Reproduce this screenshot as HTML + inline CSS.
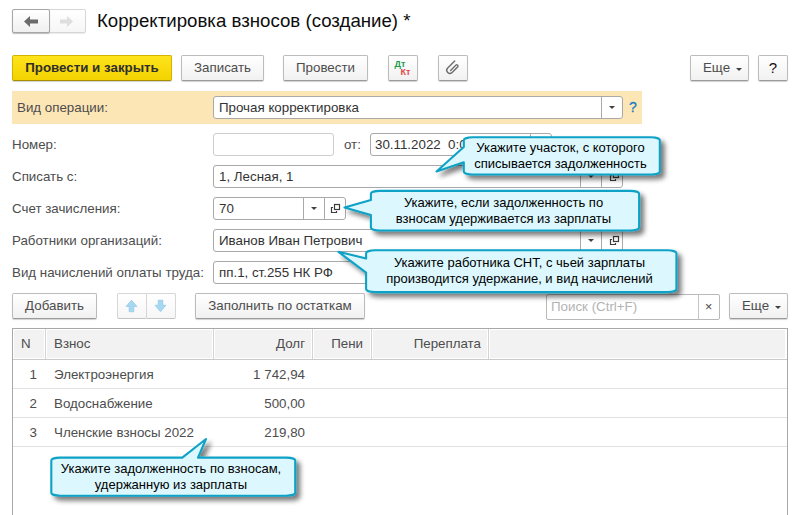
<!DOCTYPE html>
<html><head><meta charset="utf-8">
<style>
*{box-sizing:border-box;margin:0;padding:0}
html,body{width:800px;height:515px;overflow:hidden;background:#fff}
body{position:relative;font-family:"Liberation Sans",sans-serif;font-size:13.33px;color:#4d4d4d}
.a{position:absolute}
.btn{position:absolute;height:26px;border:1px solid #bcbcbc;border-bottom-color:#9a9a9a;border-radius:2px;background:linear-gradient(#ffffff,#f1f1f1);box-shadow:0 1px 1px rgba(0,0,0,.18);text-align:center;line-height:24px;color:#4d4d4d;white-space:nowrap}
.lbl{position:absolute;left:12px;white-space:nowrap;color:#4d4d4d}
.inp{position:absolute;height:23px;border:1px solid #a9a9a9;border-radius:3px;background:#fff;color:#333;line-height:21px;padding-left:5px;white-space:nowrap;overflow:hidden}
.sep{position:absolute;top:0;bottom:0;width:1px;background:#a9a9a9}
.tri{position:absolute;width:0;height:0;border-left:3px solid transparent;border-right:3px solid transparent;border-top:3px solid #404040}
.hc{position:absolute;top:330px;height:28px;background:#f2f2f2}
.cs{position:absolute;top:329px;height:30px;width:1px;background:#d4d4d4}
.row{position:absolute;left:13px;width:774px;height:1px;background:#e2e2e2}
.td{position:absolute;line-height:16px;color:#4d4d4d;white-space:nowrap}
.co{position:absolute;font-size:13px;color:#000;text-align:center;line-height:16px;white-space:nowrap}
</style></head><body>

<!-- nav buttons -->
<div class="a" style="left:12px;top:9px;width:74px;height:24px;border:1px solid #d6d6d6;border-radius:2px;background:linear-gradient(#fff,#f6f6f6);box-shadow:0 1px 1px rgba(0,0,0,.08)"></div>
<div class="a" style="left:12px;top:9px;width:38px;height:24px;border:1px solid #a6a6a6;border-radius:2px;background:linear-gradient(#fff,#f0f0f0);box-shadow:0 1px 1px rgba(0,0,0,.2)"></div>
<svg class="a" style="left:0;top:0" width="100" height="40">
  <path d="M24 21.5 L30 16 L30 19.5 L38 19.5 L38 23.5 L30 23.5 L30 27 Z" fill="#6b6b6b"/>
  <path d="M73 21.5 L67 16 L67 19.5 L60 19.5 L60 23.5 L67 23.5 L67 27 Z" fill="#dedede"/>
</svg>

<!-- title -->
<div class="a" style="left:97px;top:9px;font-size:18.67px;color:#0d0d0d;white-space:nowrap;line-height:24px">Корректировка взносов (создание) *</div>

<!-- toolbar -->
<div class="btn" style="left:12px;top:55px;width:160px;background:linear-gradient(#ffe41c,#f3d200);border-color:#d2b300;border-bottom-color:#a88f00;color:#2e2e2e;font-weight:bold">Провести и закрыть</div>
<div class="btn" style="left:181px;top:55px;width:83px">Записать</div>
<div class="btn" style="left:283px;top:55px;width:85px">Провести</div>
<div class="btn" style="left:388px;top:55px;width:30px"></div>
<div class="a" style="left:394.5px;top:60px;font-size:9px;font-weight:bold;color:#1f9a4e;line-height:9px">Дт</div>
<div class="a" style="left:400.5px;top:67.5px;font-size:9px;font-weight:bold;color:#e0484a;line-height:9px">Кт</div>
<div class="btn" style="left:438px;top:55px;width:30px"></div>
<svg class="a" style="left:438px;top:55px" width="30" height="26">
  <path d="M16.7 6.1 L9.7 13.1 A3.1 3.1 0 0 0 14.1 17.5 L19.8 11.8 A1.3 1.3 0 0 0 18 10 L12.6 15.4" fill="none" stroke="#6e6e6e" stroke-width="1.4" stroke-linecap="round"/>
</svg>
<div class="btn" style="left:690px;top:55px;width:59px;padding-right:6px">Еще</div>
<div class="tri" style="left:736px;top:68px"></div>
<div class="btn" style="left:758px;top:55px;width:30px;color:#111;font-size:15px">?</div>

<!-- orange panel -->
<div class="a" style="left:12px;top:91px;width:630px;height:33px;background:#fde6b6"></div>
<div class="lbl" style="left:17px;top:100px">Вид операции:</div>
<div class="inp" style="left:213px;top:96px;width:410px">Прочая корректировка<div class="sep" style="left:387px"></div><div class="tri" style="left:395px;top:9px"></div></div>
<div class="a" style="left:629px;top:99px;color:#1a7cc4;font-size:14px;-webkit-text-stroke:0.3px #1a7cc4">?</div>

<!-- rows -->
<div class="lbl" style="top:137px">Номер:</div>
<div class="inp" style="left:213px;top:133px;width:121px;border-color:#cdcdcd"></div>
<div class="a" style="left:344px;top:137px">от:</div>
<div class="inp" style="left:370px;top:133px;width:182px;padding-left:4px">30.11.2022&nbsp; 0:00:00<div class="sep" style="left:159px"></div></div>

<div class="lbl" style="top:169px">Списать с:</div>
<div class="inp" style="left:213px;top:165px;width:410px">1, Лесная, 1<div class="sep" style="left:366px"></div><div class="sep" style="left:387px"></div><div class="tri" style="left:374px;top:9px"></div></div>

<div class="lbl" style="top:201px">Счет зачисления:</div>
<div class="inp" style="left:213px;top:197px;width:133px">70<div class="sep" style="left:89px"></div><div class="sep" style="left:110px"></div><div class="tri" style="left:97px;top:9px"></div></div>

<div class="lbl" style="top:233px">Работники организаций:</div>
<div class="inp" style="left:213px;top:229px;width:410px">Иванов Иван Петрович<div class="sep" style="left:366px"></div><div class="sep" style="left:387px"></div><div class="tri" style="left:374px;top:9px"></div></div>

<div class="lbl" style="top:265px">Вид начислений оплаты труда:</div>
<div class="inp" style="left:213px;top:261px;width:410px">пп.1, ст.255 НК РФ</div>

<svg class="a" style="left:0;top:0" width="800" height="300">
  <g fill="none" stroke="#3c3c3c" stroke-width="1.2">
    <rect x="334.5" y="204.5" width="5" height="5"/>
    <path d="M333 207.5 H331.5 V212.5 H336.5 V211"/>
    <rect x="613.5" y="172.5" width="5" height="5"/>
    <path d="M612 175.5 H610.5 V180.5 H615.5 V179"/>
    <rect x="613.5" y="236.5" width="5" height="5"/>
    <path d="M612 239.5 H610.5 V244.5 H615.5 V243"/>
  </g>
</svg>

<!-- table toolbar -->
<div class="btn" style="left:12px;top:293px;width:85px">Добавить</div>
<div class="a" style="left:117px;top:293px;width:30px;height:26px;border:1px solid #d6d6d6;border-bottom-color:#c4c4c4;border-radius:2px;background:linear-gradient(#fff,#f6f6f6)"></div>
<div class="a" style="left:146px;top:293px;width:30px;height:26px;border:1px solid #d6d6d6;border-bottom-color:#c4c4c4;border-radius:2px;background:linear-gradient(#fff,#f6f6f6)"></div>
<svg class="a" style="left:117px;top:293px" width="60" height="26">
  <path d="M14.5 7.2 L20 13.5 L16.8 13.5 L16.8 18.8 L12.2 18.8 L12.2 13.5 L9 13.5 Z" fill="#a6d8f1" stroke="#86c3e3" stroke-width="0.6"/>
  <path d="M43.5 18.8 L49 12.2 L45.8 12.2 L45.8 7.2 L41.2 7.2 L41.2 12.2 L38 12.2 Z" fill="#a6d8f1" stroke="#86c3e3" stroke-width="0.6"/>
</svg>
<div class="btn" style="left:195px;top:293px;width:170px">Заполнить по остаткам</div>
<div class="inp" style="left:546px;top:294px;width:174px;height:26px;line-height:24px;padding-left:4px;color:#b3b3b3;border-radius:2px;border-color:#b9b9b9">Поиск (Ctrl+F)<div class="sep" style="left:151px;background:#c4c4c4"></div><div class="a" style="left:158px;top:0px;color:#444;font-size:12.5px">×</div></div>
<div class="btn" style="left:729px;top:293px;width:59px;padding-right:6px">Еще</div>
<div class="tri" style="left:775px;top:306px"></div>

<!-- table -->
<div class="a" style="left:12px;top:328px;width:776px;height:200px;border:1px solid #a8a8a8;border-bottom:none"></div>
<div class="hc" style="left:14px;width:30px"></div>
<div class="hc" style="left:47px;width:165px"></div>
<div class="hc" style="left:215px;width:96px"></div>
<div class="hc" style="left:314px;width:56px"></div>
<div class="hc" style="left:373px;width:114px"></div>
<div class="hc" style="left:490px;width:295px"></div>
<div class="a" style="left:13px;top:359px;width:774px;height:1px;background:#c9c9c9"></div>
<div class="cs" style="left:45px"></div>
<div class="cs" style="left:213px"></div>
<div class="cs" style="left:312px"></div>
<div class="cs" style="left:371px"></div>
<div class="cs" style="left:488px"></div>
<div class="td" style="left:21px;top:336px">N</div>
<div class="td" style="left:54px;top:336px">Взнос</div>
<div class="td" style="left:213px;width:92px;text-align:right;top:336px">Долг</div>
<div class="td" style="left:312px;width:51px;text-align:right;top:336px">Пени</div>
<div class="td" style="left:371px;width:110px;text-align:right;top:336px">Переплата</div>

<div class="td" style="left:13px;width:24px;text-align:right;top:367px">1</div>
<div class="td" style="left:54px;top:367px">Электроэнергия</div>
<div class="td" style="left:213px;width:92px;text-align:right;top:367px">1 742,94</div>
<div class="row" style="top:388px"></div>
<div class="td" style="left:13px;width:24px;text-align:right;top:396px">2</div>
<div class="td" style="left:54px;top:396px">Водоснабжение</div>
<div class="td" style="left:213px;width:92px;text-align:right;top:396px">500,00</div>
<div class="row" style="top:417px"></div>
<div class="td" style="left:13px;width:24px;text-align:right;top:425px">3</div>
<div class="td" style="left:54px;top:425px">Членские взносы 2022</div>
<div class="td" style="left:213px;width:92px;text-align:right;top:425px">219,80</div>
<div class="row" style="top:446px"></div>

<!-- callouts -->
<svg class="a" style="left:0;top:0" width="800" height="515">
  <defs>
    <filter id="sh" x="-20%" y="-30%" width="140%" height="170%">
      <feGaussianBlur in="SourceAlpha" stdDeviation="2.5"/>
      <feOffset dx="4" dy="4"/>
      <feComponentTransfer><feFuncA type="linear" slope="0.52"/></feComponentTransfer>
      <feMerge><feMergeNode/><feMergeNode in="SourceGraphic"/></feMerge>
    </filter>
  </defs>
  <g filter="url(#sh)" fill="#dcf8fe" stroke="#0ea2c6" stroke-width="2.1" stroke-linejoin="round">
    <path d="M472.8 137.3 H650.8 A9 3 0 0 1 659.8 140.3 V171.5 A9 3 0 0 1 650.8 174.5 H472.8 A9 3 0 0 1 463.8 171.5 V162.3 L436.5 171.5 L463.8 147 V140.3 A9 3 0 0 1 472.8 137.3 Z"/>
    <path d="M379.9 190.9 H630.1 A9 3 0 0 1 639.1 193.9 V227.5 A9 3 0 0 1 630.1 230.5 H379.9 A9 3 0 0 1 370.9 227.5 V215 L344.5 207.4 L370.9 200 V193.9 A9 3 0 0 1 379.9 190.9 Z"/>
    <path d="M375.1 250.3 H667.4 A9 3 0 0 1 676.4 253.3 V289.1 A9 3 0 0 1 667.4 292.1 H375.1 A9 3 0 0 1 366.1 289.1 V272.6 L338.5 251.8 L366.1 258.6 V253.3 A9 3 0 0 1 375.1 250.3 Z"/>
    <path d="M60.3 457.6 H182.3 L206 439 L198 457.6 H286.2 A9 3 0 0 1 295.2 460.6 V492.7 A9 3 0 0 1 286.2 495.7 H60.3 A9 3 0 0 1 51.3 492.7 V460.6 A9 3 0 0 1 60.3 457.6 Z"/>
  </g>
</svg>
<div class="co" style="left:461.5px;top:140px;width:198px">Укажите участок, с которого<br>списывается задолженность</div>
<div class="co" style="left:368.5px;top:195px;width:270px">Укажите, если задолженность по<br>взносам удерживается из зарплаты</div>
<div class="co" style="left:363.5px;top:255px;width:312px">Укажите работника СНТ, с чьей зарплаты<br>производится удержание, и вид начислений</div>
<div class="co" style="left:48px;top:461px;width:246px">Укажите задолженность по взносам,<br>удержанную из зарплаты</div>

</body></html>
